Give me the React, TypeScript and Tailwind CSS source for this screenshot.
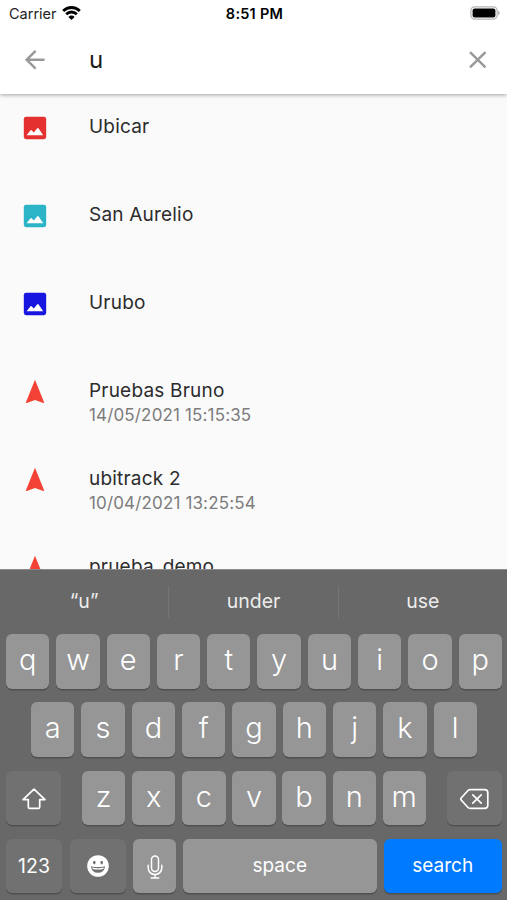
import type { ReactNode } from "react";
import { MdArrowBack, MdClose } from "react-icons/md";
import clsx from "clsx";

type Result = {
  id: string;
  title: string;
  subtitle?: string;
  color?: string;
};

const results: Result[] = [
  { id: "1", title: "Ubicar", color: "text-[#e53030]" },
  { id: "2", title: "San Aurelio", color: "text-[#2bb3c8]" },
  { id: "3", title: "Urubo", color: "text-[#1616e0]" },
  { id: "4", title: "Pruebas Bruno", subtitle: "14/05/2021 15:15:35" },
  { id: "5", title: "ubitrack 2", subtitle: "10/04/2021 13:25:54" },
  { id: "6", title: "prueba_demo" },
];

const suggestions = ["“u”", "under", "use"];

function StatusBar() {
  return (
    <div className="grid h-[27px] grid-cols-3 items-center pl-[9px] pr-[7px] text-black">
      <div className="flex items-center gap-[5px]">
        <span className="text-[14.5px] leading-[27px] text-[#222]">Carrier</span>
        <svg className="mb-[2px] h-[14px] w-[19px]" viewBox="0 0 19 14" fill="none" stroke="black" strokeWidth="2.8">
          <path d="M1.2 4.9a11.8 11.8 0 0 1 16.6 0" />
          <path d="M4.2 8.2a7.5 7.5 0 0 1 10.6 0" />
          <path d="M9.5 13.9 6.4 10.9a4.4 4.4 0 0 1 6.2 0z" fill="black" stroke="none" />
        </svg>
      </div>
      <span className="text-center text-[14.5px] font-semibold leading-[27px] tracking-[0.25px]">8:51 PM</span>
      <svg className="mb-px h-[14px] w-[30px] justify-self-end" viewBox="0 0 30 14">
        <rect x="0.9" y="0.9" width="26.2" height="12.2" rx="3.8" fill="none" stroke="#b5b5b5" strokeWidth="1.3" />
        <rect x="2.6" y="2.5" width="22.8" height="9" rx="2" fill="black" />
        <path d="M28.2 4.8c1.8.6 1.8 3.8 0 4.4z" fill="#a5a5a5" />
      </svg>
    </div>
  );
}

function PhotoIcon({ className }: { className?: string }) {
  return (
    <svg className={className} viewBox="0 0 24 24">
      <rect x="3.1" y="3.1" width="18.2" height="18.2" rx="1.9" fill="currentColor" />
      <path d="M5.4 18.2 8.6 14q.4-.5.8 0l1.8 1.9 2.9-3.4q.5-.5.9 0l3.9 5.7z" fill="white" />
    </svg>
  );
}

function ArrowIcon({ className }: { className?: string }) {
  return (
    <svg className={className} viewBox="0 0 24 24" fill="currentColor">
      <path d="M12.2 2.3 4.8 20.5q-.1.8.7.6l6.7-2.3 6.7 2.3q.8.2.7-.6z" />
    </svg>
  );
}

function ResultRow({ result }: { result: Result }) {
  return (
    <li className="flex h-[88px] shrink-0 pl-5 pt-[19px]">
      {result.color ? (
        <PhotoIcon className={clsx("size-[29.5px]", result.color)} />
      ) : (
        <ArrowIcon className="size-[29.5px] text-[#f44336]" />
      )}
      <div className="ml-[39.5px] pt-px">
        <p className="text-[19px] leading-[26px] tracking-[0.2px] text-[#2c2c2c]">{result.title}</p>
        {result.subtitle && (
          <p className="text-[17px] leading-[23px] tracking-[0.15px] text-[#7c7c7c]">{result.subtitle}</p>
        )}
      </div>
    </li>
  );
}

function Key({ children, className, dark }: { children: ReactNode; className?: string; dark?: boolean }) {
  return (
    <button
      className={clsx(
        "flex h-[54.5px] items-center justify-center rounded-[6px] text-white shadow-[0_1.5px_0_#505050]",
        dark ? "bg-[#717171]" : "bg-[#969696]",
        className
      )}
    >
      {children}
    </button>
  );
}

function Letters({ letters }: { letters: string }) {
  return (
    <>
      {letters.split("").map((letter) => (
        <Key key={letter} className="w-[43.3px] pb-[3px] text-[29px] font-light">
          {letter}
        </Key>
      ))}
    </>
  );
}

function Keyboard() {
  return (
    <div className="h-[331px] shrink-0 border-t border-[#8a8a8a] bg-[#686868]">
      {/* Word suggestions */}
      <div className="flex h-[64px] items-center divide-x divide-[#757575]">
        {suggestions.map((word) => (
          <div key={word} className="flex h-8 flex-1 items-center justify-center pb-px text-[19.5px] text-[#ececec]">
            {word}
          </div>
        ))}
      </div>

      {/* Key rows */}
      <div className="flex flex-col gap-[13.8px] pl-[6px] pr-[5px]">
        <div className="flex justify-between">
          <Letters letters="qwertyuiop" />
        </div>
        <div className="flex justify-center gap-[7px]">
          <Letters letters="asdfghjkl" />
        </div>
        <div className="flex justify-between">
          <Key dark className="w-[55px]">
            <svg className="mt-[3px] h-[22px] w-[26px]" viewBox="0 0 26 22" fill="none" stroke="white" strokeWidth="1.7" strokeLinejoin="round">
              <path d="M13 1.2 24 11.6h-5.3v7.4q0 1.4-1.4 1.4H8.7q-1.4 0-1.4-1.4v-7.4H2z" />
            </svg>
          </Key>
          <div className="flex gap-[6.8px]">
            <Letters letters="zxcvbnm" />
          </div>
          <Key dark className="w-[55px]">
            <svg className="mt-[2px] h-[22px] w-[29px]" viewBox="0 0 29 22" fill="none" stroke="white" strokeWidth="1.7" strokeLinejoin="round" strokeLinecap="round">
              <path d="M10.2 1.6h14.3q3.3 0 3.3 3.2v12.4q0 3.2-3.3 3.2H10.2q-1.3 0-2.2-.9L1.2 12q-1-1 0-2L8 2.5q.9-.9 2.2-.9z" />
              <path d="m12.8 6.8 8.4 8.4m0-8.4-8.4 8.4" />
            </svg>
          </Key>
        </div>
        <div className="flex gap-[7px]">
          <Key dark className="w-[56px] pt-px text-[19.5px]">123</Key>
          <Key dark className="ml-[1px] w-[56px]">
            <svg className="size-[22px]" viewBox="0 0 22 22">
              <circle cx="11" cy="11" r="10.8" fill="white" />
              <ellipse cx="7.3" cy="7.6" rx="1.3" ry="1.8" fill="#717171" />
              <ellipse cx="14.7" cy="7.6" rx="1.3" ry="1.8" fill="#717171" />
              <path d="M4 11.2q7 1.8 14 0-.6 6.6-7 6.6t-7-6.6z" fill="#717171" />
              <path d="M5.2 12.6q5.8 1.3 11.6 0l-.5 1.3q-5.3 1.3-10.6 0z" fill="white" />
            </svg>
          </Key>
          <Key className="w-[43px]">
            <svg className="mt-px h-[24px] w-[16px]" viewBox="0 0 16 24" fill="none" stroke="white" strokeWidth="1.5" strokeLinecap="round">
              <rect x="4.5" y="0.9" width="7" height="15.6" rx="3.5" />
              <path d="M1.2 10.2v2.6a6.8 6.8 0 0 0 13.6 0v-2.6M8 19.6v3.2M4.2 22.9h7.6" />
            </svg>
          </Key>
          <Key className="w-[193.5px] text-[19px]">space</Key>
          <Key className="flex-1 bg-[#007aff]! text-[19px]">search</Key>
        </div>
      </div>
    </div>
  );
}

export default function App() {
  return (
    <div className="flex h-[900px] w-[507px] flex-col overflow-hidden bg-[#fafafa] font-[Inter,sans-serif]">
      <header className="z-10 h-[94px] shrink-0 bg-white shadow-[0_1px_4px_rgba(0,0,0,0.35)]">
        <StatusBar />
        <div className="flex h-[66px] items-center pl-5 pr-[15px]">
          <MdArrowBack className="size-[29.5px] text-[#999]" />
          <span className="ml-[39.5px] flex-1 text-[24px] leading-[66px] text-[#1c1c1c]">u</span>
          <MdClose className="size-[29.5px] text-[#999]" />
        </div>
      </header>

      {/* Search results, cut off by the keyboard */}
      <ul className="flex min-h-0 flex-1 flex-col overflow-hidden">
        {results.map((result) => (
          <ResultRow key={result.id} result={result} />
        ))}
      </ul>

      <Keyboard />
    </div>
  );
}
